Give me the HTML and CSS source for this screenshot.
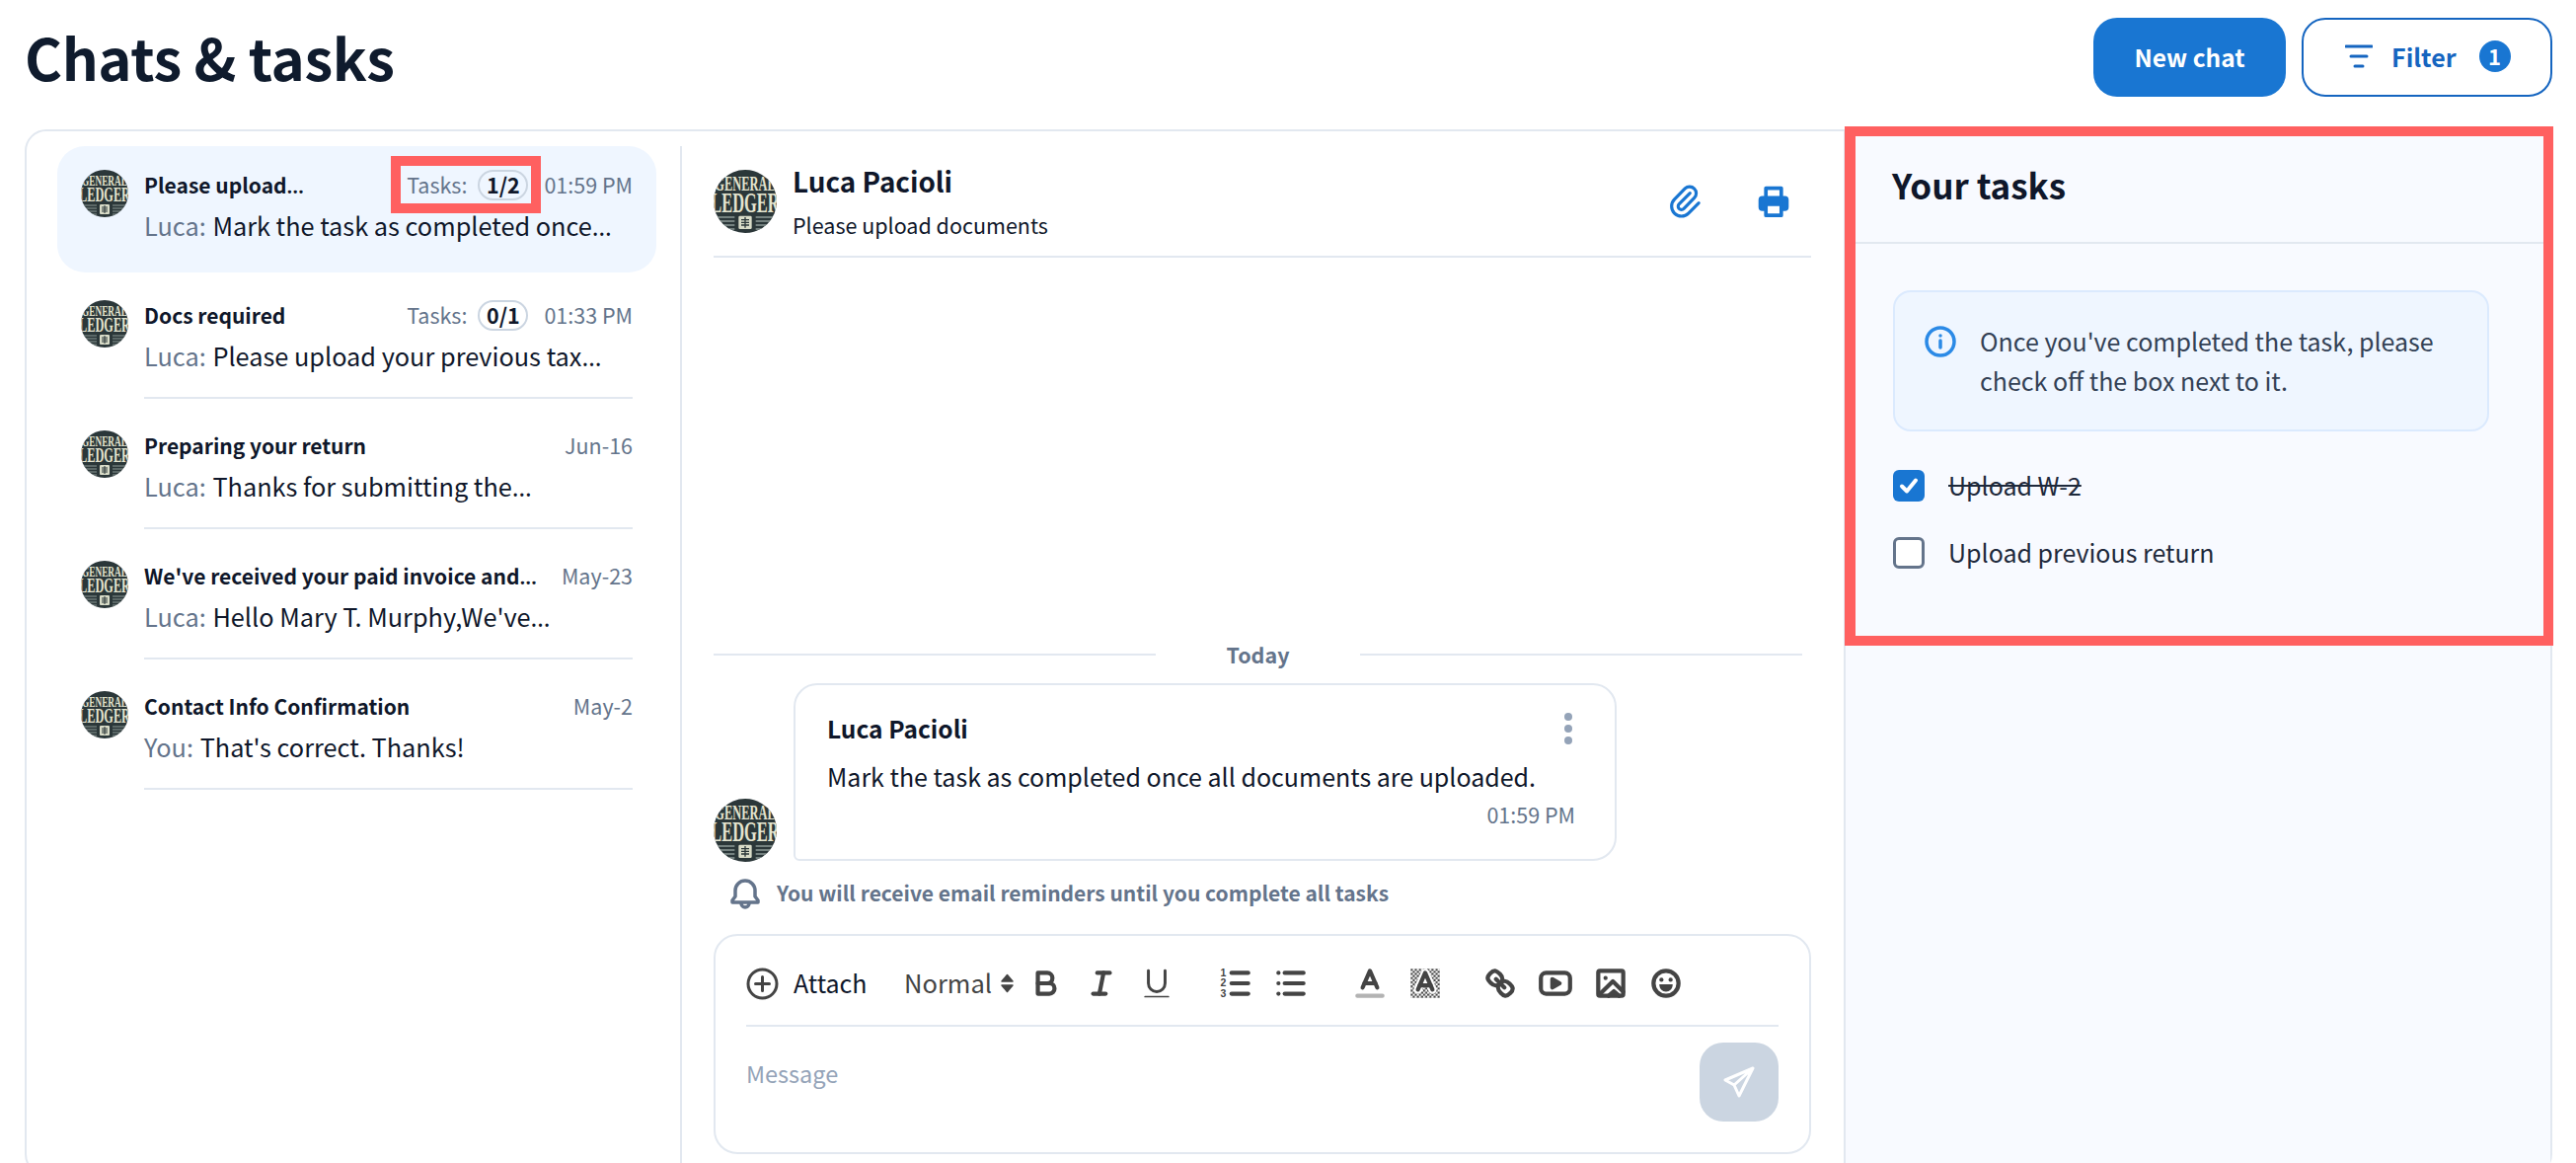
FILE: index.html
```html
<!DOCTYPE html>
<html lang="en">
<head>
<meta charset="utf-8">
<title>Chats &amp; tasks</title>
<link rel="stylesheet" href="styles.css">
</head>
<body>
<svg class="defs" aria-hidden="true">
  <defs>
    <clipPath id="avatar-clip"><circle cx="24" cy="24" r="24"/></clipPath>
    <pattern id="hatch" width="2" height="2" patternUnits="userSpaceOnUse">
      <rect width="1" height="1" fill="#444"/><rect x="1" y="1" width="1" height="1" fill="#444"/>
    </pattern>
    <symbol id="avatar" viewBox="0 0 48 48">
      <g clip-path="url(#avatar-clip)">
        <rect width="48" height="48" fill="#2b3739"/>
        <text class="av-small" x="24" y="16" text-anchor="middle" textLength="46" lengthAdjust="spacingAndGlyphs">GENERAL</text>
        <text class="av-big" x="24" y="32" text-anchor="middle" textLength="52" lengthAdjust="spacingAndGlyphs">LEDGER</text>
        <path d="M0 36h16M0 39h16M2 42h14M6 45h10M32 36h16M32 39h16M32 42h14M32 45h10" stroke="#8d9a96" stroke-width="1"/>
        <rect x="19" y="35" width="10" height="10" rx="1" fill="#d9dcc8"/>
        <path d="M21 38h6M21 40h6M21 42h6M24 36v8" stroke="#2b3739" stroke-width="1"/>
      </g>
    </symbol>
  </defs>
</svg>

<div class="page">
  <header class="topbar">
    <h1 class="title">Chats &amp; tasks</h1>
    <div class="actions">
      <button class="btn btn-primary">New chat</button>
      <button class="btn btn-outline">
        <svg class="filter-icon" viewBox="0 0 28 24" fill="none" stroke="#1565c0" stroke-width="3" stroke-linecap="round"><path d="M1 2h26M6 12h16M10 22h8"/></svg>
        <span>Filter</span>
        <span class="badge">1</span>
      </button>
    </div>
  </header>

  <main class="board">
    <section class="list">
      <article class="item item-active">
        <svg class="av av-48"><use href="#avatar"/></svg>
        <div class="item-body">
          <div class="item-top">
            <span class="item-title">Please upload<span class="ell">…</span></span>
            <span class="tasks tasks-marked">Tasks: <span class="pill">1/2</span></span>
            <span class="stamp">01:59 PM</span>
          </div>
          <div class="item-msg"><span class="who">Luca:</span> Mark the task as completed once<span class="ell">…</span></div>
        </div>
      </article>
      <article class="item">
        <svg class="av av-48"><use href="#avatar"/></svg>
        <div class="item-body">
          <div class="item-top">
            <span class="item-title">Docs required</span>
            <span class="tasks">Tasks: <span class="pill">0/1</span></span>
            <span class="stamp">01:33 PM</span>
          </div>
          <div class="item-msg"><span class="who">Luca:</span> Please upload your previous tax<span class="ell">…</span></div>
        </div>
      </article>
      <article class="item">
        <svg class="av av-48"><use href="#avatar"/></svg>
        <div class="item-body">
          <div class="item-top">
            <span class="item-title">Preparing your return</span>
            <span class="stamp">Jun-16</span>
          </div>
          <div class="item-msg"><span class="who">Luca:</span> Thanks for submitting the<span class="ell">…</span></div>
        </div>
      </article>
      <article class="item">
        <svg class="av av-48"><use href="#avatar"/></svg>
        <div class="item-body">
          <div class="item-top">
            <span class="item-title">We've received your paid invoice and<span class="ell">…</span></span>
            <span class="stamp">May-23</span>
          </div>
          <div class="item-msg"><span class="who">Luca:</span> Hello Mary T. Murphy,We've<span class="ell">…</span></div>
        </div>
      </article>
      <article class="item">
        <svg class="av av-48"><use href="#avatar"/></svg>
        <div class="item-body">
          <div class="item-top">
            <span class="item-title">Contact Info Confirmation</span>
            <span class="stamp">May-2</span>
          </div>
          <div class="item-msg"><span class="who">You:</span> That's correct. Thanks!</div>
        </div>
      </article>
    </section>

    <section class="chat">
      <div class="chat-head">
        <svg class="av av-64"><use href="#avatar"/></svg>
        <div class="chat-who">
          <div class="chat-name">Luca Pacioli</div>
          <div class="chat-sub">Please upload documents</div>
        </div>
        <svg class="clip-icon" viewBox="0 0 24 24" fill="none" stroke="#1976d2" stroke-width="1.900" stroke-linecap="round" stroke-linejoin="round"><path d="M15.172 7l-6.586 6.586a2 2 0 102.828 2.828l6.414-6.586a4 4 0 00-5.656-5.656l-6.415 6.585a6 6 0 108.486 8.486L20.5 13"/></svg>
        <svg class="print-icon" viewBox="0 0 24 24" fill="none" stroke="#1976d2" stroke-width="2.6" stroke-linejoin="round"><path d="M6.5 9V2.500h11V9"/><path fill="#1976d2" stroke-width="1.6" d="M6 18H4a2 2 0 0 1-2-2v-5a2 2 0 0 1 2-2h16a2 2 0 0 1 2 2v5a2 2 0 0 1-2 2h-2"/><rect x="6.5" y="14" width="11" height="8" fill="#fff"/></svg>
      </div>

      <div class="thread">
        <div class="day"><span class="day-label">Today</span></div>
        <div class="msg-row">
          <svg class="av av-64"><use href="#avatar"/></svg>
          <div class="bubble">
            <div class="bubble-top">
              <span class="bubble-name">Luca Pacioli</span>
              <span class="dots"><i></i><i></i><i></i></span>
            </div>
            <div class="bubble-text">Mark the task as completed once all documents are uploaded.</div>
            <div class="bubble-time">01:59 PM</div>
          </div>
        </div>
        <div class="reminder">
          <svg class="bell" viewBox="0 0 32 32" fill="none" stroke="#64748b" stroke-width="3.500" stroke-linejoin="round" stroke-linecap="round"><path d="M16 3a10 10 0 0 0-10 10v6l-3 4v2h26v-2l-3-4v-6A10 10 0 0 0 16 3z"/><path d="M12 26a4 4 0 0 0 8 0"/></svg>
          <span class="reminder-text">You will receive email reminders until you complete all tasks</span>
        </div>
      </div>

      <div class="composer">
        <div class="toolbar">
          <svg class="tb-attach" viewBox="0 0 33 33" fill="none" stroke="#444" stroke-width="3" stroke-linecap="round"><circle cx="16.5" cy="16.5" r="14.5"/><path d="M16.5 9.5v14M9.5 16.5h14"/></svg>
          <span class="attach-label">Attach</span>
          <span class="fmt">Normal</span>
          <svg class="fmt-arrows" viewBox="0 0 13 20" fill="#444" stroke="#444" stroke-width="1.500" stroke-linejoin="round"><path d="M6.500 1.500L12 8H1zM6.500 18.500L1 12h11z"/></svg>

          <svg class="ql" viewBox="0 0 18 18"><path d="M5,4H9.5A2.5,2.5,0,0,1,12,6.5v0A2.5,2.5,0,0,1,9.5,9H5V4Z"/><path d="M5,9h5.5A2.5,2.5,0,0,1,13,11.5v0A2.5,2.5,0,0,1,10.5,14H5V9Z"/></svg>
          <svg class="ql" viewBox="0 0 18 18"><line x1="7" x2="13" y1="4" y2="4"/><line x1="5" x2="11" y1="14" y2="14"/><line x1="8" x2="10" y1="14" y2="4"/></svg>
          <svg class="ql ql-thin" viewBox="0 0 18 18"><path d="M5,3V9a4,4,0,0,0,4,4H9a4,4,0,0,0,4-4V3"/><rect class="ql-fill" height="0.800" rx="0.400" width="12" x="3" y="15" stroke="none"/></svg>

          <svg class="ql group" viewBox="0 0 18 18"><line x1="7" x2="15" y1="4" y2="4"/><line x1="7" x2="15" y1="9" y2="9"/><line x1="7" x2="15" y1="14" y2="14"/><text class="ql-num" x="3" y="5.5">1</text><text class="ql-num" x="3" y="10.5">2</text><text class="ql-num" x="3" y="15.5">3</text></svg>
          <svg class="ql" viewBox="0 0 18 18"><line x1="6" x2="15" y1="4" y2="4"/><line x1="6" x2="15" y1="9" y2="9"/><line x1="6" x2="15" y1="14" y2="14"/><line x1="3" x2="3" y1="4" y2="4"/><line x1="3" x2="3" y1="9" y2="9"/><line x1="3" x2="3" y1="14" y2="14"/></svg>

          <svg class="ql group" viewBox="0 0 18 18"><line class="ql-label" x1="3" x2="15" y1="15" y2="15"/><polyline points="5.5 11 9 3 12.5 11"/><line x1="11.63" x2="6.38" y1="9" y2="9"/></svg>
          <svg class="ql" viewBox="0 0 18 18"><rect x="2" y="2" width="14" height="14" fill="url(#hatch)" stroke="none"/><polyline class="ql-halo" points="5.5 12 9 4 12.5 12"/><polyline points="5.5 12 9 4 12.5 12"/><line x1="11.63" x2="6.38" y1="10" y2="10"/></svg>

          <svg class="ql group-s" viewBox="0 0 18 18"><line x1="7" x2="11" y1="7" y2="11"/><path d="M8.9,4.577a3.476,3.476,0,0,1,.36,4.679A3.476,3.476,0,0,1,4.577,8.9C3.185,7.5,2.035,6.4,4.217,4.217S7.5,3.185,8.9,4.577Z"/><path d="M13.423,9.1a3.476,3.476,0,0,0-4.679-.36,3.476,3.476,0,0,0,.36,4.679c1.392,1.392,2.5,2.542,4.679.36S14.815,10.5,13.423,9.1Z"/></svg>
          <svg class="ql" viewBox="0 0 18 18"><rect x="2" y="4" width="14" height="10" rx="2.5"/><path class="ql-fill" d="M7.500 7l3.500 2-3.500 2z"/></svg>
          <svg class="ql" viewBox="0 0 18 18"><rect x="3" y="3" width="12" height="12" rx="0.8"/><circle class="ql-fill" cx="6.5" cy="6.500" r="1" stroke="none"/><polyline points="3.500 14.500 10 8 15 13"/><polyline points="8 15 10.500 12.800 13 15"/></svg>
          <svg class="ql" viewBox="0 0 18 18"><circle cx="9" cy="9" r="6"/><circle class="ql-fill" cx="6.800" cy="7.300" r="1" stroke="none"/><circle class="ql-fill" cx="11.200" cy="7.300" r="1" stroke="none"/><path class="ql-fill" d="M5.800 9.500h6.400c0 2.300-1.500 3.500-3.200 3.500s-3.200-1.200-3.200-3.500z" stroke="none"/></svg>
        </div>
        <div class="compose-body">
          <span class="placeholder">Message</span>
          <button class="send" aria-label="Send">
            <svg viewBox="0 0 32 32" fill="none" stroke="#fff" stroke-width="3" stroke-linejoin="round" stroke-linecap="round"><path d="M30 2L2 14l9 5 5 11zM30 2L11 19"/></svg>
          </button>
        </div>
      </div>
    </section>

    <aside class="panel">
      <div class="panel-head">Your tasks</div>
      <div class="panel-body">
        <div class="info">
          <svg class="info-icon" viewBox="0 0 32 32" fill="none" stroke="#2b8ae6" stroke-width="3.500" stroke-linecap="round"><circle cx="16" cy="16" r="14"/><path d="M16 15v7"/><circle cx="16" cy="10" r="1" fill="#2b8ae6" stroke-width="1.500"/></svg>
          <p class="info-text">Once you've completed the task, please check off the box next to it.</p>
        </div>
        <ul class="checks">
          <li class="check">
            <span class="box box-on"><svg viewBox="0 0 32 32" fill="none" stroke="#fff" stroke-width="4" stroke-linecap="round" stroke-linejoin="round"><path d="M9 16.500l5 5 9-11"/></svg></span>
            <span class="check-label done">Upload W-2</span>
          </li>
          <li class="check">
            <span class="box"></span>
            <span class="check-label">Upload previous return</span>
          </li>
        </ul>
      </div>
      <div class="panel-mark"></div>
    </aside>
  </main>
</div>
</body>
</html>
```

FILE: styles.css
```css
* { box-sizing: border-box; }
html, body { margin: 0; height: 100%; }
body {
  font-family: "Noto Sans CJK SC", "Noto Sans", sans-serif;
  color: #0f172a;
  background: #fff;
  overflow: hidden;
}
.defs { position: absolute; width: 0; height: 0; }
.av-small { font: 700 15px "Liberation Serif", serif; fill: #e4e4cf; }
.av-big { font: 700 22px "Liberation Serif", serif; fill: #e4e4cf; }

.page { height: 1178px; overflow: hidden; padding: 0 24px 0 25px; }

.topbar { height: 131px; display: flex; justify-content: space-between; padding-top: 18px; }
.title { margin: 0; font-size: 58px; line-height: 78px; letter-spacing: -0.4px; font-weight: 700; color: #0f1b2d; }
.actions { display: flex; gap: 16px; height: 80px; }
.btn {
  font-family: inherit; font-size: 25px; font-weight: 600; height: 80px;
  border-radius: 24px; display: flex; align-items: center; padding: 0 0 2px;
}
.btn-primary { width: 195px; background: #1976d2; color: #fff; border: 0; justify-content: center; font-size: 24.500px; }
.btn-outline { width: 254px; background: #fff; color: #1565c0; border: 2px solid #1565c0; padding-left: 42px; }
.filter-icon { width: 28px; height: 24px; margin-right: 19px; }
.badge {
  width: 32px; height: 32px; border-radius: 50%; background: #1976d2; color: #fff;
  font-size: 22px; line-height: 30px; text-align: center; margin-left: 23px;
}

.board {
  height: 1060px; border: 2px solid #e2e8f0; border-radius: 22px;
  display: grid; grid-template-columns: 664px 1177px 1fr;
}

.list { margin-top: 15px; padding: 0 24px 0 31px; border-right: 2px solid #e2e8f0; display: flex; flex-direction: column; gap: 4px; }
.item { height: 128px; padding: 24px 24px 4px; display: flex; gap: 16px; border-radius: 28px; }
.item-active { background: #eff6ff; }
.av { display: block; flex: none; }
.av-48 { width: 48px; height: 48px; }
.av-64 { width: 64px; height: 64px; }
.item-body { flex: 1; min-width: 0; border-bottom: 2px solid #e2e8f0; }
.item-active .item-body { border-bottom: 0; }
.item-top { display: flex; align-items: flex-start; height: 32px; font-size: 21.500px; line-height: 30px; }
.item-title { font-size: 21px; font-weight: 600; flex: 1; white-space: nowrap; color: #0f172a; }
.item-title .ell { letter-spacing: 3px; }
.tasks { position: relative; height: 32px; color: #64748b; display: flex; align-items: flex-start; gap: 11px; margin-right: 16px; }
.tasks-marked::after {
  content: ""; position: absolute; left: -16px; right: -13px; top: -14px; bottom: -12px;
  border: 10px solid #ff6060;
}
.pill {
  width: 51px; height: 31px; border: 2px solid #cbd5e1; border-radius: 16px; text-align: center;
  color: #0f172a; font-weight: 600; line-height: 25px;
}
.stamp { color: #64748b; white-space: nowrap; }
.item-msg { margin-top: 4px; font-size: 25.300px; line-height: 40px; white-space: nowrap; color: #0f172a; }
.who { color: #64748b; margin-right: 1px; }
.ell { font-family: "Noto Sans", sans-serif; letter-spacing: 1.500px; }

.chat { display: flex; flex-direction: column; padding: 39px 33px 20px 32px; min-height: 0; }
.chat-head { display: flex; align-items: flex-start; height: 89px; border-bottom: 2px solid #e2e8f0; }
.chat-who { margin-left: 16px; flex: 1; }
.chat-name { font-size: 27.800px; font-weight: 600; line-height: 23px; }
.chat-sub { font-size: 21.500px; line-height: 32px; margin-top: 17px; }
.clip-icon { width: 40px; height: 40px; margin-top: 12px; margin-right: 53px; }
.print-icon { width: 34px; height: 34px; margin-top: 15px; margin-right: 21px; }

.thread { flex: 1; display: flex; flex-direction: column; justify-content: flex-end; }
.day { display: flex; align-items: center; height: 32px; margin-bottom: 13px; margin-right: 9px; }
.day::before, .day::after { content: ""; flex: 1; height: 2px; background: #e2e8f0; }
.day-label { width: 207px; text-align: center; font-size: 21.500px; line-height: 32px; font-weight: 600; color: #64748b; }
.msg-row { display: flex; align-items: flex-end; gap: 17px; }
.bubble { width: 834px; height: 180px; border: 2px solid #e2e8f0; border-radius: 24px 24px 24px 6px; padding: 28px 40px 0 32px; margin-bottom: 1px; }
.bubble-top { display: flex; justify-content: space-between; height: 32px; }
.bubble-name { font-size: 24.500px; font-weight: 600; line-height: 32px; }
.dots { display: flex; flex-direction: column; gap: 4px; margin-right: 3px; }
.dots i { width: 8px; height: 8px; border-radius: 50%; background: #94a3b8; }
.bubble-text { font-size: 25px; line-height: 34px; margin-top: 15px; white-space: nowrap; }
.bubble-time { font-size: 21.500px; line-height: 28px; margin-top: 8px; text-align: right; color: #64748b; }
.reminder { display: flex; align-items: center; gap: 16px; padding-left: 16px; margin: 16px 0 25px; height: 32px; font-size: 21px; font-weight: 600; color: #64748b; }
.reminder-text { line-height: 30px; padding-bottom: 2px; }
.bell { width: 32px; height: 32px; }

.composer { height: 223px; border: 2px solid #e2e8f0; border-radius: 24px; padding: 0 31px; flex: none; }
.toolbar { display: flex; align-items: center; height: 92px; padding-top: 6px; border-bottom: 2px solid #e2e8f0; gap: 18px; }
.tb-attach { width: 33px; height: 33px; }
.attach-label { font-size: 25px; line-height: 32px; padding-bottom: 2px; margin-left: -3px; width: 74px; }
.fmt { font-size: 25.500px; line-height: 32px; padding-bottom: 2px; color: #444; margin-left: 20px; width: 85px; margin-right: -5px; }
.fmt-arrows { width: 13px; height: 20px; margin-right: -4.500px; }
.ql { width: 38px; height: 38px; fill: none; stroke: #444; stroke-width: 2; stroke-linecap: round; stroke-linejoin: round; flex: none; }
.ql-thin { stroke-width: 1.400; }
.ql-fill { fill: #444; }
.ql-label { stroke: #b3b3b3; }
.ql-halo { stroke: #fff; stroke-width: 4; }
.ql-num { font: 700 5px "Liberation Sans", sans-serif; fill: #444; stroke: none; text-anchor: middle; }
.group { margin-left: 24px; }
.group-s { margin-left: 20px; }
.compose-body { display: flex; justify-content: space-between; align-items: flex-start; }
.placeholder { font-size: 23.500px; line-height: 38px; color: #94a3b8; margin-top: 28px; }
.send { width: 80px; height: 80px; margin-top: 16px; border: 0; padding: 24px; border-radius: 24px; background: #cbd5e1; }
.send svg { display: block; width: 32px; height: 32px; }

.panel { position: relative; background: #f8faff; border-left: 2px solid #e2e8f0; border-top-right-radius: 20px; }
.panel-head { height: 114px; padding-left: 47px; border-bottom: 2px solid #e2e8f0; font-size: 35px; font-weight: 600; line-height: 108px; }
.panel-body { padding: 47px 62px 0 48px; }
.info { display: flex; gap: 24px; height: 143px; padding: 29px 28px 0 30px; background: #eff6ff; border: 2px solid #dbeafe; border-radius: 18px; }
.info-icon { width: 32px; height: 32px; flex: none; margin-top: 5px; }
.info-text { margin: 0; font-size: 25px; line-height: 40px; color: #334155; }
.checks { list-style: none; margin: 39px 0 0; padding: 0; display: flex; flex-direction: column; gap: 36px; }
.check { display: flex; align-items: center; gap: 24px; height: 32px; font-size: 25px; color: #1e293b; }
.check-label { line-height: 30px; padding-bottom: 2px; }
.box { width: 32px; height: 32px; border: 3.500px solid #64748b; border-radius: 6px; background: #fff; }
.box-on { background: #1976d2; border: 0; }
.box-on svg { display: block; width: 32px; height: 32px; }
.done { text-decoration: line-through; }
.panel-mark { position: absolute; top: -5px; left: -1px; right: -3px; height: 526px; border: 10px solid #ff6060; border-left-width: 11px; pointer-events: none; }
```
